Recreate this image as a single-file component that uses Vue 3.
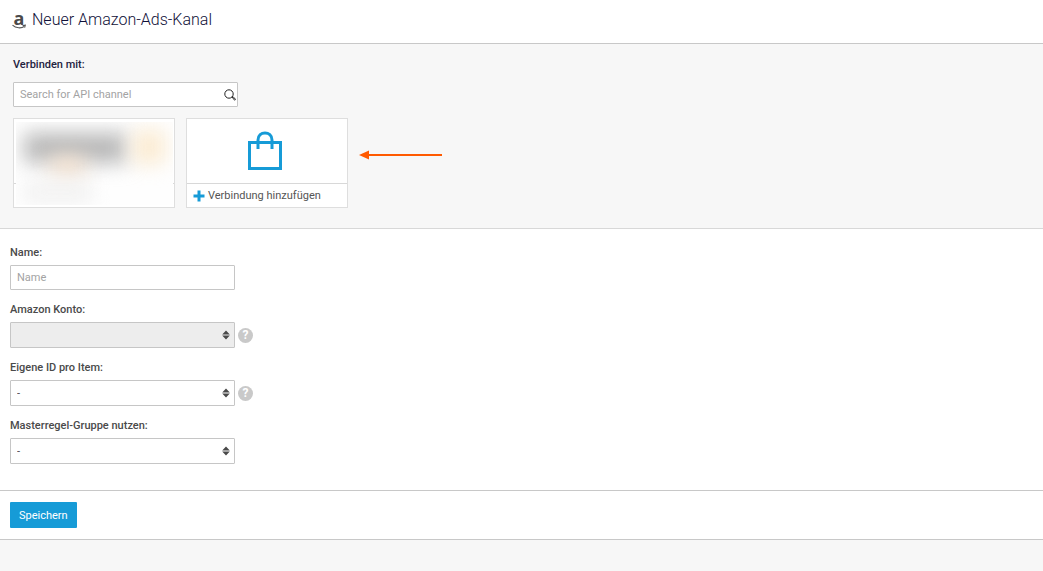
<script setup>
import { ref } from 'vue'

const search = ref('')
const name = ref('')
const selects = ref([
  { id: 'account', label: 'Amazon Konto:', disabled: true, options: [''], value: '', help: true },
  { id: 'item-id', label: 'Eigene ID pro Item:', disabled: false, options: ['-'], value: '-', help: true },
  { id: 'rule-group', label: 'Masterregel-Gruppe nutzen:', disabled: false, options: ['-'], value: '-', help: false },
])
</script>

<template>
  <div class="page">
    <header class="header">
      <svg class="brand" viewBox="0 0 14 24" aria-hidden="true">
        <text x="7" y="17" text-anchor="middle">a</text>
        <path d="M0.5 17.2C4 20.4 9.5 20.5 12.2 18.5" />
        <path d="M10.6 17.5L13.3 17.2L12.6 19.6" />
      </svg>
      <h1 class="title">Neuer Amazon-Ads-Kanal</h1>
    </header>

    <section class="connect">
      <label class="label dark" for="search">Verbinden mit:</label>
      <div class="control search">
        <input id="search" v-model="search" type="text" placeholder="Search for API channel" />
        <svg class="magnifier" viewBox="0 0 12 12" aria-hidden="true">
          <circle cx="5" cy="5" r="4.2" />
          <path d="M8 8L9 7.6L11.6 10.4L10.6 11.2Z" />
        </svg>
      </div>
      <div class="cards">
        <button class="card" type="button" aria-label="API">
          <span class="card-top"></span>
          <span class="card-bottom"></span>
          <span class="veil">
            <span class="smudge grey"></span>
            <span class="smudge yellow"></span>
            <span class="smudge orange"></span>
            <span class="smudge caption"></span>
          </span>
        </button>
        <button class="card" type="button">
          <span class="card-top">
            <svg class="bag" viewBox="0 0 34 40" aria-hidden="true">
              <path d="M1.5 11.5H32.5V37.5H1.5Z" />
              <path d="M10 18V9C10 -0.5 24 -0.5 24 9V18" />
            </svg>
          </span>
          <span class="card-bottom">
            <svg class="plus" viewBox="0 0 12 12" aria-hidden="true">
              <path d="M6 0.5V11.5M0.5 6H11.5" />
            </svg>
            Verbindung hinzufügen
          </span>
        </button>
        <svg class="arrow" viewBox="0 0 83 10" aria-hidden="true">
          <path class="shaft" d="M8 5H83" />
          <path class="head" d="M0 5L10 0.5V9.5Z" />
        </svg>
      </div>
    </section>

    <form @submit.prevent>
      <div class="fields">
        <div class="field">
          <label class="label" for="name">Name:</label>
          <div class="control">
            <input id="name" v-model="name" type="text" placeholder="Name" />
          </div>
        </div>
        <div v-for="s in selects" :key="s.id" class="field">
          <label class="label" :for="s.id">{{ s.label }}</label>
          <div class="row">
            <div class="control">
              <select :id="s.id" v-model="s.value" :disabled="s.disabled">
                <option v-for="o in s.options" :key="o" :value="o">{{ o }}</option>
              </select>
              <svg class="sorter" viewBox="0 0 8 10" aria-hidden="true">
                <path d="M4 0.5L7.8 4.4H0.2ZM4 9.5L7.8 5.6H0.2Z" />
              </svg>
            </div>
            <button v-if="s.help" class="help" type="button">?</button>
          </div>
        </div>
      </div>
      <div class="actions">
        <button class="save" type="submit">Speichern</button>
      </div>
    </form>
  </div>
</template>

<style>
body {
  background: #f7f7f7;
}
</style>

<style scoped>
.page {
  font-family: Roboto, "Liberation Sans", sans-serif;
  font-size: 11px;
  color: #4a4a4a;
}
.page *,
.page {
  box-sizing: border-box;
}
button,
input,
select {
  font: inherit;
  color: inherit;
  margin: 0;
}
svg {
  display: block;
  flex: none;
}
.header {
  display: flex;
  align-items: center;
  gap: 6px;
  padding: 8px 12px 11px;
  background: #fff;
  border-bottom: 1px solid #c8c8c8;
}
.brand {
  width: 14px;
  height: 24px;
  overflow: visible;
}
.brand text {
  font: bold 18px "Open Sans", sans-serif;
  fill: #4a4a4a;
}
.brand path {
  fill: none;
  stroke: #555;
  stroke-width: 1.1;
}
.title {
  margin: 0;
  font-size: 16px;
  line-height: 24px;
  font-weight: 300;
  color: #101038;
}
.connect {
  padding: 13px 13px 20px;
  border-bottom: 1px solid #d8d8d8;
}
.label {
  display: block;
  line-height: 16px;
  font-weight: 500;
}
.dark {
  color: #23233f;
}
.control {
  display: grid;
  align-items: center;
  width: 225px;
  max-width: 100%;
}
.control > * {
  grid-area: 1 / 1;
}
.control input,
.control select {
  width: 100%;
  height: 26px;
  padding: 0 6px;
  border: 1px solid #c6c6c6;
  border-radius: 1px;
  background: #fff;
  appearance: none;
  outline: none;
}
.control input {
  height: 25px;
}
.control select:disabled {
  background: #ededed;
  opacity: 1;
}
input::placeholder {
  color: #a3a3a3;
  opacity: 1;
}
.search {
  margin: 9px 0 11px;
}
.magnifier {
  width: 12px;
  height: 12px;
  justify-self: end;
  margin-right: 2px;
  fill: none;
  stroke: #222;
  stroke-width: 1;
}
.cards {
  display: flex;
  align-items: center;
  gap: 11px;
}
.card {
  position: relative;
  width: 162px;
  padding: 0;
  border: 1px solid #dedede;
  background: #fff;
  text-align: left;
}
.card-top {
  display: flex;
  align-items: center;
  justify-content: center;
  height: 64px;
  padding-right: 4px;
}
.card-bottom {
  display: flex;
  align-items: center;
  gap: 3px;
  height: 24px;
  padding-left: 6px;
  border-top: 1px solid #d8d8d8;
  color: #555;
}
.bag {
  width: 34px;
  height: 40px;
  fill: none;
  stroke: #169bd7;
  stroke-width: 3;
}
.plus {
  width: 12px;
  height: 12px;
  stroke: #169bd7;
  stroke-width: 3;
}
.veil {
  position: absolute;
  inset: 3px 1px 2px 2px;
  overflow: hidden;
  background: #fefefe;
}
.smudge {
  position: absolute;
  filter: blur(10px);
}
.grey {
  inset: 11px 46px 42px 8px;
  background: #b8b8b8;
}
.yellow {
  inset: 8px 8px 41px 117px;
  background: #fbebd2;
}
.orange {
  inset: 34px 88px 29px 34px;
  background: #f4e2d0;
}
.caption {
  inset: 62px 80px 5px 8px;
  background: #eeeeee;
}
.arrow {
  width: 83px;
  height: 10px;
  margin-bottom: 17px;
}
.shaft {
  stroke: #ff5a00;
  stroke-width: 2;
}
.head {
  fill: #ff5a00;
}
.fields {
  display: flex;
  flex-direction: column;
  gap: 12px;
  padding: 16px 10px 26px;
  background: #fff;
}
.field {
  display: flex;
  flex-direction: column;
  gap: 4px;
}
.row {
  display: flex;
  align-items: center;
  gap: 3px;
}
.sorter {
  width: 8px;
  height: 10px;
  justify-self: end;
  margin-right: 5px;
  fill: #4a4a4a;
  pointer-events: none;
}
.help {
  width: 15px;
  height: 15px;
  padding: 0;
  border: 0;
  border-radius: 50%;
  background: #c9c9c9;
  color: #fff;
  font-size: 12px;
  font-weight: 700;
  line-height: 15px;
  text-align: center;
}
.actions {
  padding: 11px 10px;
  background: #fff;
  border-top: 1px solid #c8c8c8;
  border-bottom: 1px solid #c8c8c8;
}
.save {
  display: block;
  height: 26px;
  padding: 0 9px;
  border: 0;
  border-radius: 1px;
  background: #169bd7;
  color: #fff;
}
</style>
